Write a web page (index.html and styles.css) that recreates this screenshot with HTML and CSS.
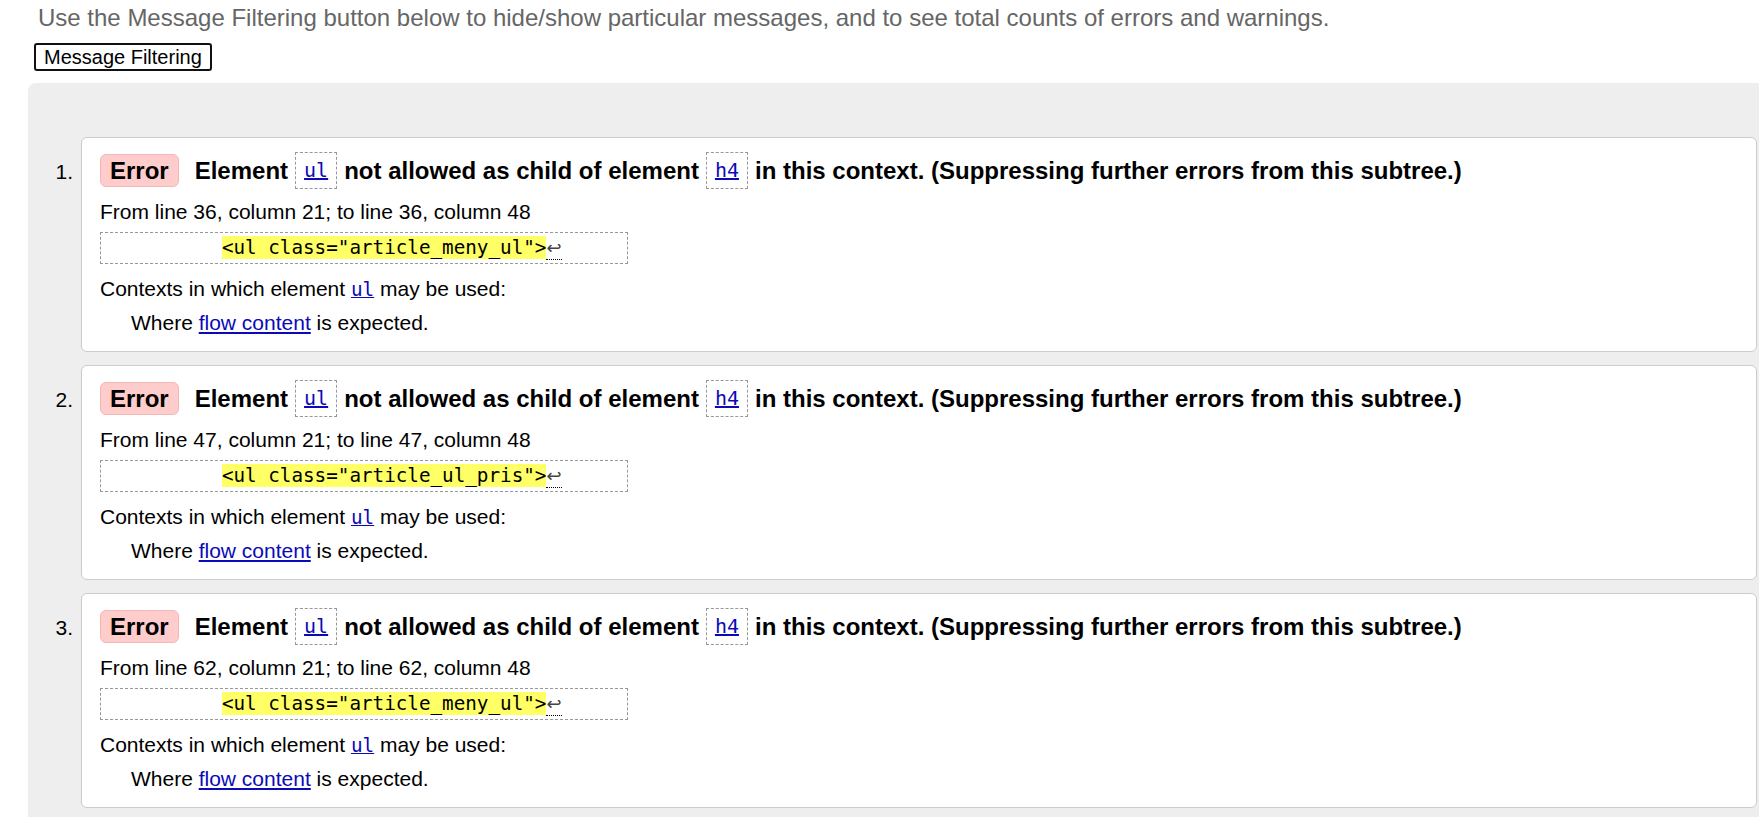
FILE: index.html
```html
<!DOCTYPE html>
<html lang="en">
<head>
<meta charset="utf-8">
<title>Message Filtering</title>
<link rel="stylesheet" href="styles.css">
</head>
<body>
<p class="intro">Use the Message Filtering button below to hide/show particular messages, and to see total counts of errors and warnings.</p>
<button class="filter-btn" type="button">Message Filtering</button>
<div class="results">
  <ol class="messages">
    <li class="msg">
      <span class="num">1.</span>
      <div class="card">
        <p class="title"><span class="badge">Error</span><span class="txt">Element</span><code class="tag"><a href="#">ul</a></code><span class="txt">not allowed as child of element</span><code class="tag"><a href="#">h4</a></code><span class="txt">in this context. (Suppressing further errors from this subtree.)</span></p>
        <p class="loc">From line 36, column 21; to line 36, column 48</p>
        <div class="extract"><code class="src">          <span class="hl">&lt;ul class="article_meny_ul"&gt;</span><span class="lf">↩</span></code></div>
        <p class="ctx">Contexts in which element <a class="mono" href="#">ul</a> may be used:</p>
        <p class="where">Where <a href="#">flow content</a> is expected.</p>
      </div>
    </li>
    <li class="msg">
      <span class="num">2.</span>
      <div class="card">
        <p class="title"><span class="badge">Error</span><span class="txt">Element</span><code class="tag"><a href="#">ul</a></code><span class="txt">not allowed as child of element</span><code class="tag"><a href="#">h4</a></code><span class="txt">in this context. (Suppressing further errors from this subtree.)</span></p>
        <p class="loc">From line 47, column 21; to line 47, column 48</p>
        <div class="extract"><code class="src">          <span class="hl">&lt;ul class="article_ul_pris"&gt;</span><span class="lf">↩</span></code></div>
        <p class="ctx">Contexts in which element <a class="mono" href="#">ul</a> may be used:</p>
        <p class="where">Where <a href="#">flow content</a> is expected.</p>
      </div>
    </li>
    <li class="msg">
      <span class="num">3.</span>
      <div class="card">
        <p class="title"><span class="badge">Error</span><span class="txt">Element</span><code class="tag"><a href="#">ul</a></code><span class="txt">not allowed as child of element</span><code class="tag"><a href="#">h4</a></code><span class="txt">in this context. (Suppressing further errors from this subtree.)</span></p>
        <p class="loc">From line 62, column 21; to line 62, column 48</p>
        <div class="extract"><code class="src">          <span class="hl">&lt;ul class="article_meny_ul"&gt;</span><span class="lf">↩</span></code></div>
        <p class="ctx">Contexts in which element <a class="mono" href="#">ul</a> may be used:</p>
        <p class="where">Where <a href="#">flow content</a> is expected.</p>
      </div>
    </li>
  </ol>
</div>
</body>
</html>
```
FILE: styles.css
```css
html, body {
  margin: 0;
  padding: 0;
  background: #fff;
}
body {
  font-family: "Liberation Sans", Arial, sans-serif;
  color: #000;
  overflow: hidden;
}
a {
  color: #0a0ab8;
  text-decoration: underline;
}
.intro {
  margin: 0;
  padding: 4px 0 0 38px;
  font-size: 24px;
  line-height: 28px;
  color: #666;
  white-space: nowrap;
}
.filter-btn {
  display: block;
  margin: 11px 0 0 34px;
  height: 28px;
  padding: 0 8px;
  font-family: "Liberation Sans", Arial, sans-serif;
  font-size: 20px;
  line-height: 24px;
  color: #000;
  background: #fff;
  border: 2px solid #111;
  border-radius: 3px;
}
.results {
  margin: 12px 0 0 28px;
  padding: 54px 0 20px 0;
  background: #eee;
  border-top-left-radius: 8px;
}
.messages {
  list-style: none;
  margin: 0;
  padding: 0;
  display: flex;
  flex-direction: column;
  gap: 13px;
}
.msg {
  display: flex;
  align-items: baseline;
}
.num {
  flex: 0 0 53px;
  box-sizing: border-box;
  padding-right: 8px;
  text-align: right;
  font-size: 21px;
}
.card {
  flex: 1;
  margin-right: 2px;
  background: #fff;
  border: 1px solid #ccc;
  border-radius: 6px;
  padding: 14px 18px 16px 18px;
}
.title {
  margin: 0;
  display: flex;
  align-items: center;
  gap: 7px;
  font-size: 24px;
  font-weight: bold;
  line-height: 37px;
  white-space: nowrap;
}
.badge {
  display: inline-block;
  height: 33px;
  box-sizing: border-box;
  padding: 0 9px;
  line-height: 31px;
  background: #fcc;
  border: 1px solid #f2b8b8;
  border-radius: 6px;
  margin-right: 9px;
}
.tag {
  display: inline-block;
  box-sizing: border-box;
  height: 37px;
  padding: 0 8px;
  line-height: 35px;
  border: 1px dashed #999;
  font-family: "DejaVu Sans Mono", "Liberation Mono", monospace;
  font-size: 20px;
  font-weight: normal;
}
.loc, .ctx, .where {
  margin: 0;
  font-size: 21px;
  line-height: 24px;
}
.loc {
  margin-top: 11px;
}
.extract {
  margin-top: 8px;
  width: 528px;
  height: 32px;
  box-sizing: border-box;
  border: 1px dashed #999;
  padding: 0 5px;
  line-height: 30px;
}
.src {
  font-family: "DejaVu Sans Mono", "Liberation Mono", monospace;
  font-size: 19.25px;
  white-space: pre;
}
.hl {
  background: #ff6;
}
.lf {
  font-family: "DejaVu Sans", sans-serif;
  color: #444;
  font-size: 18px;
  border-bottom: 1px dotted #000;
  padding-bottom: 1px;
}
.ctx {
  margin-top: 13px;
}
.mono {
  font-family: "DejaVu Sans Mono", "Liberation Mono", monospace;
  font-size: 19.25px;
}
.where {
  margin-top: 9px;
  padding-left: 31px;
}
```
